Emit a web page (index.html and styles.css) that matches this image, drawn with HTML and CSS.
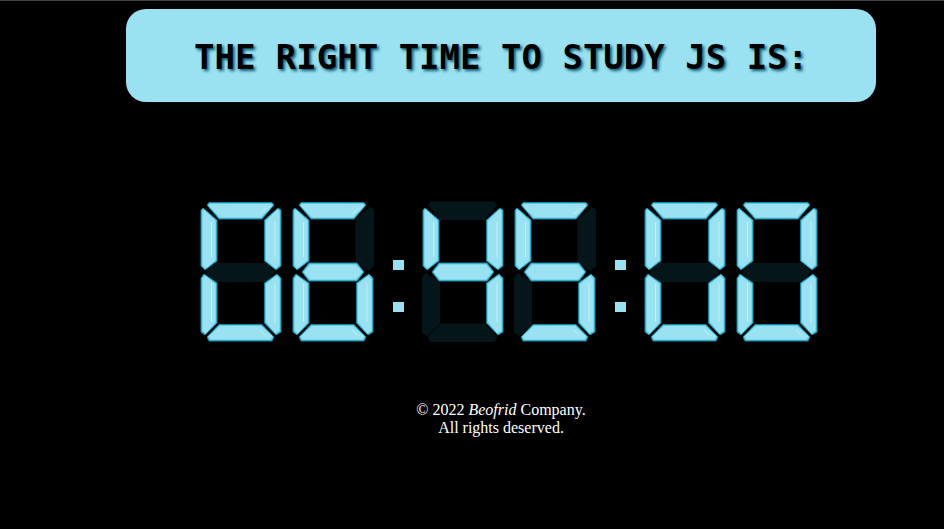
FILE: index.html
```html
<!DOCTYPE html>
<html lang="en">
<head>
    <meta charset="utf-8">
    <meta name="viewport" content="width=device-width, initial-scale=1">
    <title>Digital Clock</title>

    <link rel="stylesheet" href="styles.css">
</head>
<body>
    <div class="title-box">
        <h1 class="title">THE RIGHT TIME TO STUDY JS IS:</h1>
    </div>

    <div class="clock" id="clock"></div>

    <p class="footer">&copy; 2022 <em>Beofrid</em> Company.<br>All rights deserved.</p>

    <script src="clock.js"></script>
</body>
</html>
```

FILE: styles.css
```css
body
{
    margin: 0;
    background-color: black;
    border-top: 1px solid #444;
    font-family: "Liberation Serif", serif;
}
.title-box
{
    width: 750px;
    height: 93px;
    margin: 8px 0 0 126px;
    padding-top: 2px;
    box-sizing: border-box;
    display: flex;
    align-items: center;
    justify-content: center;
    background-color: #9ae1f1;
    border-radius: 20px;
}
.title
{
    margin: 0;
    font-family: "DejaVu Sans Mono", monospace;
    font-size: 34px;
    font-weight: bold;
    color: black;
    text-shadow: 2px 2px 3px #0b5f78;
}
.clock
{
    display: flex;
    margin: 100px 0 0 200px;
}
.digit
{
    width: 81px;
    height: 139px;
    margin-right: 11px;
    overflow: visible;
}
.digit.last
{
    margin-right: 20px;
}
.colon
{
    width: 11px;
    height: 139px;
    margin-right: 18px;
    padding-top: 58px;
    box-sizing: border-box;
}
.colon span
{
    display: block;
    width: 11px;
    height: 10px;
    margin-bottom: 32px;
    background-color: #9ae1f1;
}
.seg-edge
{
    fill: #5accea;
    stroke: #14849f;
    stroke-width: 1;
}
.seg-fill
{
    fill: #9ae1f1;
}
.seg-shine
{
    stroke: #c4f0f9;
    stroke-width: 1;
}
.seg-off
{
    fill: #04161a;
    stroke: #04161a;
    stroke-width: 2;
    stroke-linejoin: round;
}
.footer
{
    width: 200px;
    margin: 60px 0 0 401px;
    font-size: 16px;
    line-height: 18px;
    text-align: center;
    color: white;
}
```

FILE: clock.js
```js
let clock=document.getElementById("clock");
let time="06:45:00";

// segment order: top, top left, top right, middle, bottom left, bottom right, bottom
let segments=[
    [[7,3],[9,0.5],[72,0.5],[74,3],[62,17],[19,17]],
    [[1,8],[3,6],[17,18],[17,59],[5,68],[1,64]],
    [[64.5,18],[78,6],[81,8],[81,64],[76,68],[64.5,59]],
    [[10,70],[17,61],[65,61],[72,70],[65,79],[17,79]],
    [[1,76],[4,72],[17,81],[17,121],[5,133],[1,130]],
    [[64.5,81],[77,72],[81,76],[81,130],[76,133],[64.5,121]],
    [[19,122.5],[62,122.5],[74,135],[72,139],[9,139],[7,135]]
];
let midOff=[[7,70],[15,62],[66,62],[74,70],[66,79],[15,79]];

let shines=[
    [60,12,66.5,6],
    [11.5,20,11.5,55],
    [75,20,75,55],
    null,
    [11.5,81,11.5,120],
    [75,81,75,120],
    [60,128,66,134.5]
];

let lit={
    "0":[0,1,2,4,5,6],
    "4":[1,2,3,5],
    "5":[0,1,3,5,6],
    "6":[0,1,3,4,5,6]
};

function toPoints(points)
{
    return points.map(p=>p.join(",")).join(" ");
}

// shrinks a segment on each side for the lighter inner part
function inset(points)
{
    let xs=points.map(p=>p[0]);
    let ys=points.map(p=>p[1]);
    let minX=Math.min(...xs), maxX=Math.max(...xs);
    let minY=Math.min(...ys), maxY=Math.max(...ys);
    let sx=(maxX-minX-3)/(maxX-minX);
    let sy=(maxY-minY-3)/(maxY-minY);
    return points.map(p=>[
        ((minX+maxX)/2+(p[0]-(minX+maxX)/2)*sx).toFixed(1),
        ((minY+maxY)/2+(p[1]-(minY+maxY)/2)*sy).toFixed(1)
    ]);
}

function drawDigit(digit,last)
{
    let html=`<svg class="digit${last?" last":""}" viewBox="0 0 81 139">`;
    segments.forEach((points,i)=>
    {
        if(lit[digit].includes(i))
        {
            html+=`<polygon class="seg-edge" points="${toPoints(points)}"/>`;
            html+=`<polygon class="seg-fill" points="${toPoints(inset(points))}"/>`;
            let s=shines[i];
            if(s)
            {
                html+=`<line class="seg-shine" x1="${s[0]}" y1="${s[1]}" x2="${s[2]}" y2="${s[3]}"/>`;
            }
        }
        else
        {
            html+=`<polygon class="seg-off" points="${toPoints(i==3?midOff:points)}"/>`;
        }
    });
    return html+"</svg>";
}

let html="";
time.split("").forEach((ch,i)=>
{
    if(ch==":")
    {
        html+=`<div class="colon"><span></span><span></span></div>`;
    }
    else
    {
        html+=drawDigit(ch,time[i+1]==":");
    }
});
clock.innerHTML=html;
```
